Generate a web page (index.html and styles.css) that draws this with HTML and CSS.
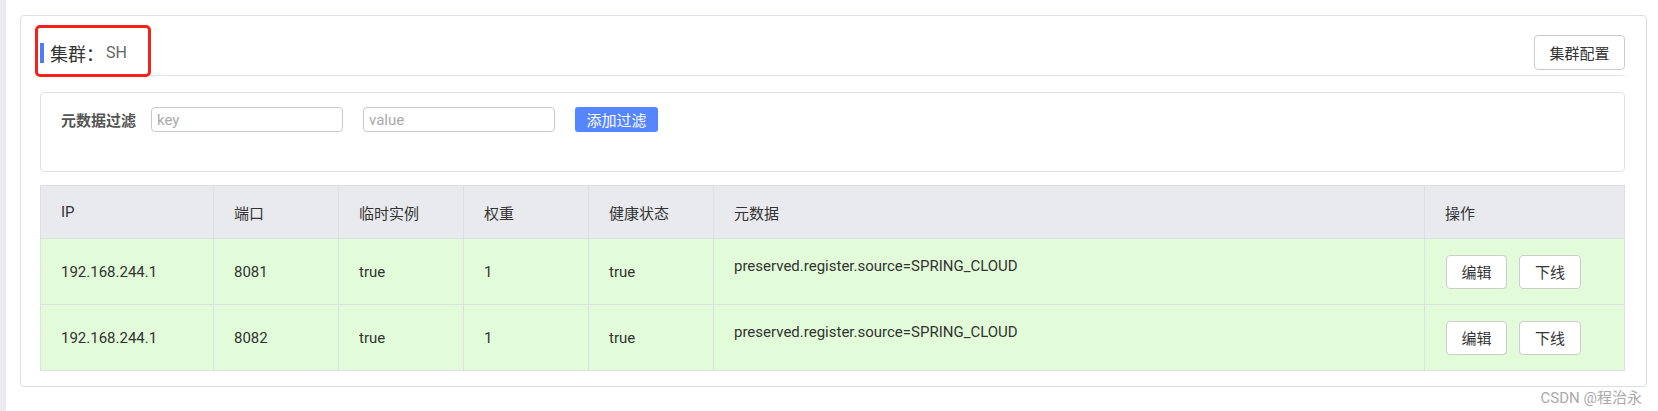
FILE: index.html
```html
<!DOCTYPE html>
<html lang="zh-CN">
<head>
  <meta charset="UTF-8" />
  <title>服务详情 | 集群</title>
  <link rel="stylesheet" href="styles.css">
</head>
<body>

<div class="page">
  <section class="panel">
    <div class="panel-head">
      <h3 class="cluster-title"><span class="bar"></span>集群：<small>SH</small></h3>
      <button class="btn btn-config">集群配置</button>
    </div>

    <div class="filter-box">
      <label>元数据过滤</label>
      <input type="text" placeholder="key">
      <input type="text" placeholder="value">
      <button class="btn-primary">添加过滤</button>
    </div>

    <table class="instance-table">
      <colgroup>
        <col style="width:173px">
        <col style="width:125px">
        <col style="width:125px">
        <col style="width:125px">
        <col style="width:125px">
        <col style="width:711px">
        <col>
      </colgroup>
      <thead>
        <tr>
          <th>IP</th>
          <th>端口</th>
          <th>临时实例</th>
          <th>权重</th>
          <th>健康状态</th>
          <th>元数据</th>
          <th>操作</th>
        </tr>
      </thead>
      <tbody>
        <tr>
          <td>192.168.244.1</td>
          <td>8081</td>
          <td>true</td>
          <td>1</td>
          <td>true</td>
          <td class="meta">preserved.register.source=SPRING_CLOUD</td>
          <td><button class="btn btn-sm">编辑</button><button class="btn btn-sm">下线</button></td>
        </tr>
        <tr>
          <td>192.168.244.1</td>
          <td>8082</td>
          <td>true</td>
          <td>1</td>
          <td>true</td>
          <td class="meta">preserved.register.source=SPRING_CLOUD</td>
          <td><button class="btn btn-sm">编辑</button><button class="btn btn-sm">下线</button></td>
        </tr>
      </tbody>
    </table>

    <!-- red highlight around the cluster name -->
    <div class="highlight"></div>
  </section>

  <span class="watermark">CSDN @程治永</span>
</div>

</body>
</html>
```

FILE: styles.css
```css
body {
  margin: 0;
  font-family: Roboto, "Noto Sans CJK SC", sans-serif;
  font-size: 15px;
  color: #333;
  background-color: #fff;
}

.page {
  position: relative;
  box-sizing: border-box;
  height: 411px;
  overflow: hidden;
  border-left: 6px solid #e9ecf1; /* edge of the side menu */
  padding: 15px 11px 0 14px;
}

.panel {
  position: relative;
  border: 1px solid #dcdfe6;
  border-radius: 4px;
  padding: 19px 21px 15px 19px;
}

.panel-head {
  display: flex;
  justify-content: space-between;
  align-items: center;
  padding-bottom: 5px;
  border-bottom: 1px solid #e4e6eb;
}

.cluster-title {
  margin: 0;
  display: flex;
  align-items: center;
  font-size: 18px;
  font-weight: normal;
  color: #333;
}

.cluster-title .bar {
  width: 4px;
  height: 20px;
  background-color: #4f7cff;
  margin-right: 6px;
}

.cluster-title small {
  font-size: 16px;
  color: #666;
  margin-left: 2px;
}

.btn {
  box-sizing: border-box;
  background-color: #fff;
  border: 1px solid #ccc;
  border-radius: 4px;
  font: inherit;
  color: #333;
  padding: 0;
  cursor: pointer;
}

.btn-config {
  width: 91px;
  height: 35px;
}

.filter-box {
  display: flex;
  align-items: center;
  margin-top: 16px;
  border: 1px solid #e0e2e7;
  border-radius: 4px;
  padding: 14px 20px 39px 20px;
}

.filter-box label {
  font-weight: bold;
  color: #555;
  margin-right: 15px;
}

.filter-box input {
  box-sizing: border-box;
  width: 192px;
  height: 25px;
  border: 1px solid #c8c9ce;
  border-radius: 4px;
  padding: 0 5px;
  margin-right: 20px;
  font: inherit;
  color: #333;
}

.filter-box input::placeholder {
  color: #aaa;
}

.btn-primary {
  width: 83px;
  height: 25px;
  background-color: #5585ff;
  color: #fff;
  border: none;
  border-radius: 3px;
  font: inherit;
  padding: 0;
  cursor: pointer;
}

.instance-table {
  width: 100%;
  margin-top: 13px;
  border-collapse: collapse;
  table-layout: fixed;
}

.instance-table thead tr {
  height: 53px;
}

.instance-table tbody tr {
  height: 66px;
}

.instance-table th,
.instance-table td {
  text-align: left;
  padding: 0 20px;
  border: 1px solid #dcdfe6;
}

.instance-table th {
  font-weight: normal;
  background-color: #e9eaee;
}

.instance-table td {
  background-color: #e2fcd9;
}

.instance-table td.meta {
  padding-bottom: 12px;
}

.btn-sm {
  width: 61px;
  height: 34px;
  margin: 0 12px 0 1px;
}

.btn-sm + .btn-sm {
  width: 62px;
  margin: 0;
}

.highlight {
  position: absolute;
  left: 14px;
  top: 9px;
  width: 116px;
  height: 52px;
  box-sizing: border-box;
  border: 3px solid #f5221b;
  border-radius: 5px;
}

.watermark {
  position: absolute;
  right: 16px;
  top: 386px;
  font-size: 15px;
  color: #aaa;
}
```
